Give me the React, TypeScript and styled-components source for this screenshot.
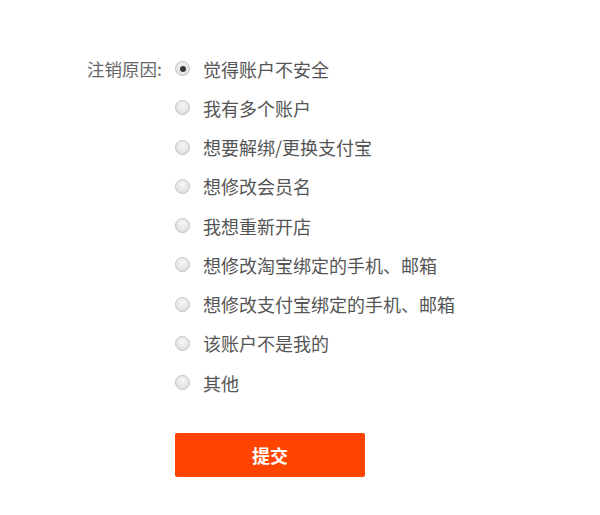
import { useState } from "react";
import styled, { createGlobalStyle } from "styled-components";

const GlobalStyle = createGlobalStyle`
  html, body {
    margin: 0;
    padding: 0;
    background: #fff;
  }
  body {
    font-family: "Noto Sans CJK SC", "Microsoft YaHei", sans-serif;
  }
`;

const REASONS = [
  "觉得账户不安全",
  "我有多个账户",
  "想要解绑/更换支付宝",
  "想修改会员名",
  "我想重新开店",
  "想修改淘宝绑定的手机、邮箱",
  "想修改支付宝绑定的手机、邮箱",
  "该账户不是我的",
  "其他",
];

const Page = styled.div`
  width: 600px;
  height: 515px;
  padding: 49px 0 0 87px;
  box-sizing: border-box;
`;

const Field = styled.div`
  display: flex;
  align-items: flex-start;
`;

const Label = styled.div`
  width: 87px;
  height: 39.25px;
  line-height: 39.25px;
  font-size: 17.5px;
  color: #666;
`;

const Options = styled.div`
  display: flex;
  flex-direction: column;
`;

const Option = styled.label`
  display: flex;
  align-items: center;
  height: 39.25px;
  cursor: pointer;
`;

const Radio = styled.span<{ $checked: boolean }>`
  width: 13px;
  height: 13px;
  border-radius: 50%;
  border: 1px solid #c2c2c2;
  background: radial-gradient(circle at 50% 35%, #f6f6f6, #dadada);
  display: flex;
  align-items: center;
  justify-content: center;
  margin-left: 1px;
  margin-right: 13px;

  &::after {
    content: "";
    width: 6px;
    height: 6px;
    border-radius: 50%;
    background: #3a3a3a;
    display: ${(p) => (p.$checked ? "block" : "none")};
  }
`;

const OptionText = styled.span`
  font-size: 18px;
  color: #555;
  line-height: 1;
`;

const Submit = styled.button`
  margin-top: 31px;
  margin-left: 1px;
  width: 190px;
  height: 44px;
  border: none;
  border-radius: 2px;
  background: #ff4400;
  color: #fff;
  font-family: "Noto Sans CJK SC", sans-serif;
  font-size: 18px;
  font-weight: 700;
  cursor: pointer;
`;

export default function App() {
  const [picked, setPicked] = useState(0);
  return (
    <Page>
      <GlobalStyle />
      <Field>
        <Label>注销原因:</Label>
        <Options>
          {REASONS.map((r, i) => (
            <Option key={r} onClick={() => setPicked(i)}>
              <Radio $checked={picked === i} />
              <OptionText>{r}</OptionText>
            </Option>
          ))}
          <Submit>提交</Submit>
        </Options>
      </Field>
    </Page>
  );
}
